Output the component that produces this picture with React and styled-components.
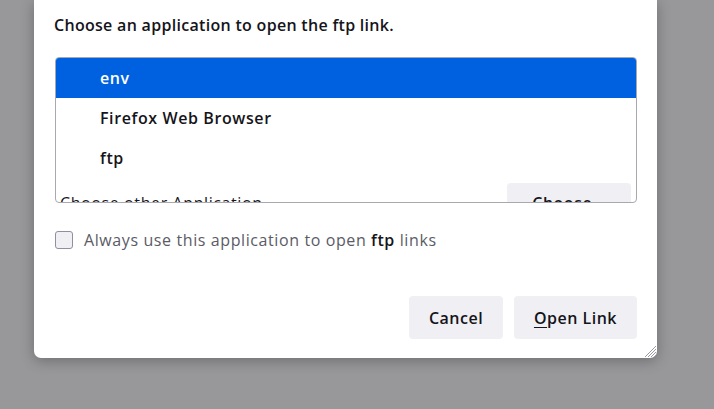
import React from "react";
import styled, { createGlobalStyle } from "styled-components";

const Global = createGlobalStyle`
  html, body { margin: 0; padding: 0; }
  body {
    width: 714px;
    height: 409px;
    overflow: hidden;
    background: #98989b;
    font-family: "Open Sans", "Noto Sans", sans-serif;
  }
`;

const Page = styled.div`
  width: 714px;
  height: 409px;
  display: flex;
  align-items: flex-start;
  padding-left: 34px;
  box-sizing: border-box;
`;

const Dialog = styled.div`
  position: relative;
  width: 623px;
  height: 358px;
  background: #ffffff;
  border-radius: 0 0 7px 7px;
  box-shadow: 0 3px 14px rgba(0, 0, 0, 0.28);
  padding: 0 20px;
  box-sizing: border-box;
  display: flex;
  flex-direction: column;
`;

const Title = styled.div`
  margin-top: 15px;
  height: 20px;
  line-height: 20px;
  font-size: 16px;
  font-weight: 600;
  color: #15141a;
  letter-spacing: 0.3px;
`;

const ListBox = styled.div`
  margin-top: 22px;
  margin-left: 1px;
  height: 146px;
  border: 1px solid #a8a8ae;
  border-radius: 4px;
  overflow: hidden;
  box-sizing: border-box;
`;

const Row = styled.div`
  height: 40px;
  display: flex;
  align-items: center;
  padding-left: 44px;
  font-size: 16px;
  font-weight: 600;
  letter-spacing: 0.6px;
  color: ${(p) => (p.$selected ? "#ffffff" : "#15141a")};
  background: ${(p) => (p.$selected ? "#0061e0" : "transparent")};
`;

const OtherRow = styled.div`
  display: flex;
  align-items: center;
  justify-content: space-between;
  padding: 5px 5px 5px 4px;
`;

const OtherLabel = styled.span`
  font-size: 16px;
  letter-spacing: 0.6px;
  color: #15141a;
`;

const SmallButton = styled.div`
  width: 124px;
  height: 40px;
  border-radius: 4px;
  background: #f0f0f4;
  display: flex;
  align-items: center;
  justify-content: center;
  font-size: 16px;
  font-weight: 600;
  letter-spacing: 0.5px;
  color: #15141a;
`;

const CheckRow = styled.label`
  margin-top: 26px;
  margin-left: 1px;
  display: flex;
  align-items: center;
  gap: 11px;
  font-size: 16px;
  color: #5b5b66;
  letter-spacing: 0.6px;
`;

const Box = styled.span`
  width: 18px;
  height: 18px;
  border: 1px solid #8f8f9d;
  border-radius: 3px;
  background: #f0f0f4;
  box-sizing: border-box;
`;

const Strong = styled.b`
  font-weight: 600;
  color: #15141a;
`;

const Footer = styled.div`
  margin-top: 45px;
  display: flex;
  justify-content: flex-end;
  gap: 11px;
`;

const Button = styled.div`
  width: ${(p) => p.$w}px;
  height: 43px;
  border-radius: 4px;
  background: #f0f0f4;
  display: flex;
  align-items: center;
  justify-content: center;
  font-size: 16px;
  font-weight: 600;
  color: #15141a;
  letter-spacing: 0.5px;
`;

const U = styled.span`
  text-decoration: underline;
  text-underline-offset: 3px;
`;

const Grip = styled.svg`
  position: absolute;
  right: 0;
  bottom: 0;
`;

export default function App() {
  return (
    <>
      <Global />
      <Page>
        <Dialog>
          <Title>Choose an application to open the ftp link.</Title>
          <ListBox>
            <Row $selected>env</Row>
            <Row>Firefox Web Browser</Row>
            <Row>ftp</Row>
            <OtherRow>
              <OtherLabel>Choose other Application</OtherLabel>
              <SmallButton>Choose…</SmallButton>
            </OtherRow>
          </ListBox>
          <CheckRow>
            <Box />
            <span>
              Always use this application to open <Strong>ftp</Strong> links
            </span>
          </CheckRow>
          <Footer>
            <Button $w={94}>Cancel</Button>
            <Button $w={123}>
              <U>O</U>pen Link
            </Button>
          </Footer>
          <Grip width="13" height="13" viewBox="0 0 13 13">
            <g stroke="#9a9aa0" strokeWidth="1">
              <line x1="1" y1="12" x2="12" y2="1" />
              <line x1="4" y1="12" x2="12" y2="4" />
              <line x1="7" y1="12" x2="12" y2="7" />
              <line x1="10" y1="12" x2="12" y2="10" />
            </g>
          </Grip>
        </Dialog>
      </Page>
    </>
  );
}
